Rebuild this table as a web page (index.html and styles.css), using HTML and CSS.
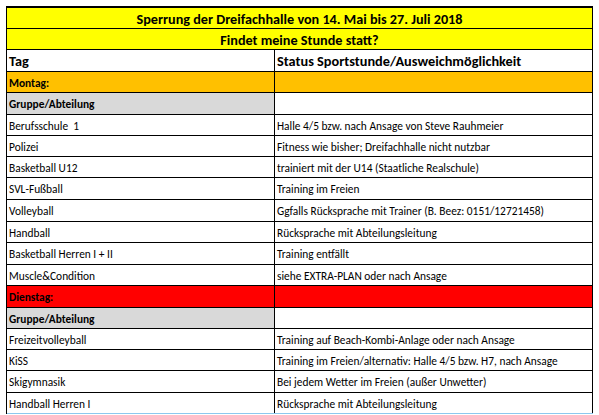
FILE: index.html
```html
<!DOCTYPE html>
<html lang="de">
<head>
<meta charset="utf-8">
<title>Sperrung der Dreifachhalle</title>
<link rel="stylesheet" href="styles.css">
</head>
<body>
<div class="sheet">
  <div class="row h20 yellow"><div class="cell full title">Sperrung der Dreifachhalle von 14. Mai bis 27. Juli 2018</div></div>
  <div class="row h20 yellow"><div class="cell full title">Findet meine Stunde statt?</div></div>
  <div class="row h21 head"><div class="cell left">Tag</div><div class="cell right">Status Sportstunde/Ausweichmöglichkeit</div></div>
  <div class="row h20 orange bold"><div class="cell left">Montag:</div><div class="cell right"></div></div>
  <div class="row h21 bold"><div class="cell left gray">Gruppe/Abteilung</div><div class="cell right"></div></div>
  <div class="row h20"><div class="cell left">Berufsschule&nbsp; 1</div><div class="cell right">Halle 4/5 bzw. nach Ansage von Steve Rauhmeier</div></div>
  <div class="row h20"><div class="cell left">Polizei</div><div class="cell right">Fitness wie bisher; Dreifachhalle nicht nutzbar</div></div>
  <div class="row h20"><div class="cell left">Basketball U12</div><div class="cell right">trainiert mit der U14 (Staatliche Realschule)</div></div>
  <div class="row h21"><div class="cell left">SVL-Fußball</div><div class="cell right">Training im Freien</div></div>
  <div class="row h21"><div class="cell left">Volleyball</div><div class="cell right">Ggfalls Rücksprache mit Trainer (B. Beez: 0151/12721458)</div></div>
  <div class="row h20"><div class="cell left">Handball</div><div class="cell right">Rücksprache mit Abteilungsleitung</div></div>
  <div class="row h21"><div class="cell left">Basketball Herren I + II</div><div class="cell right">Training entfällt</div></div>
  <div class="row h20"><div class="cell left">Muscle&amp;Condition</div><div class="cell right">siehe EXTRA-PLAN oder nach Ansage</div></div>
  <div class="row h21 red bold"><div class="cell left">Dienstag:</div><div class="cell right"></div></div>
  <div class="row h20 bold"><div class="cell left gray">Gruppe/Abteilung</div><div class="cell right"></div></div>
  <div class="row h20"><div class="cell left">Freizeitvolleyball</div><div class="cell right">Training auf Beach-Kombi-Anlage oder nach Ansage</div></div>
  <div class="row h20"><div class="cell left">KiSS</div><div class="cell right">Training im Freien/alternativ: Halle 4/5 bzw. H7, nach Ansage</div></div>
  <div class="row h21"><div class="cell left">Skigymnasik</div><div class="cell right">Bei jedem Wetter im Freien (außer Unwetter)</div></div>
  <div class="row h20 last"><div class="cell left">Handball Herren I</div><div class="cell right">Rücksprache mit Abteilungsleitung</div></div>
</div>
</body>
</html>
```
FILE: styles.css
```css
html, body {
  margin: 0;
  padding: 0;
  background: #fff;
}
body {
  padding: 6px 0 0 6px;
  font-family: Carlito, Calibri, Lato, "Liberation Sans", sans-serif;
  font-size: 11.4px;
  color: #000;
}
.sheet {
  width: 587px;
  box-sizing: border-box;
  border-top: 2px solid #000;
  border-left: 1px solid #000;
}
.row {
  display: flex;
  border-bottom: 1px solid #000;
}
.row.last {
  border-bottom: 1px solid #8cc8ee;
}
.h20 { height: 20px; }
.h21 { height: 21px; }
.cell {
  display: flex;
  align-items: center;
  box-sizing: content-box;
  border-right: 1px solid #000;
  white-space: nowrap;
  overflow: hidden;
  padding-top: 1px;
}
.left {
  width: 265px;
  padding-left: 2px;
}
.right {
  width: 315px;
  padding-left: 2px;
}
.full {
  width: 585px;
  justify-content: center;
}
.title {
  font-weight: bold;
  font-size: 14.2px;
}
.yellow { background: #ffff00; }
.orange { background: #ffc000; }
.red { background: #ff0000; }
.gray { background: #d9d9d9; }
.bold { font-weight: bold; }
.head {
  font-weight: bold;
  font-size: 14.3px;
}
```
